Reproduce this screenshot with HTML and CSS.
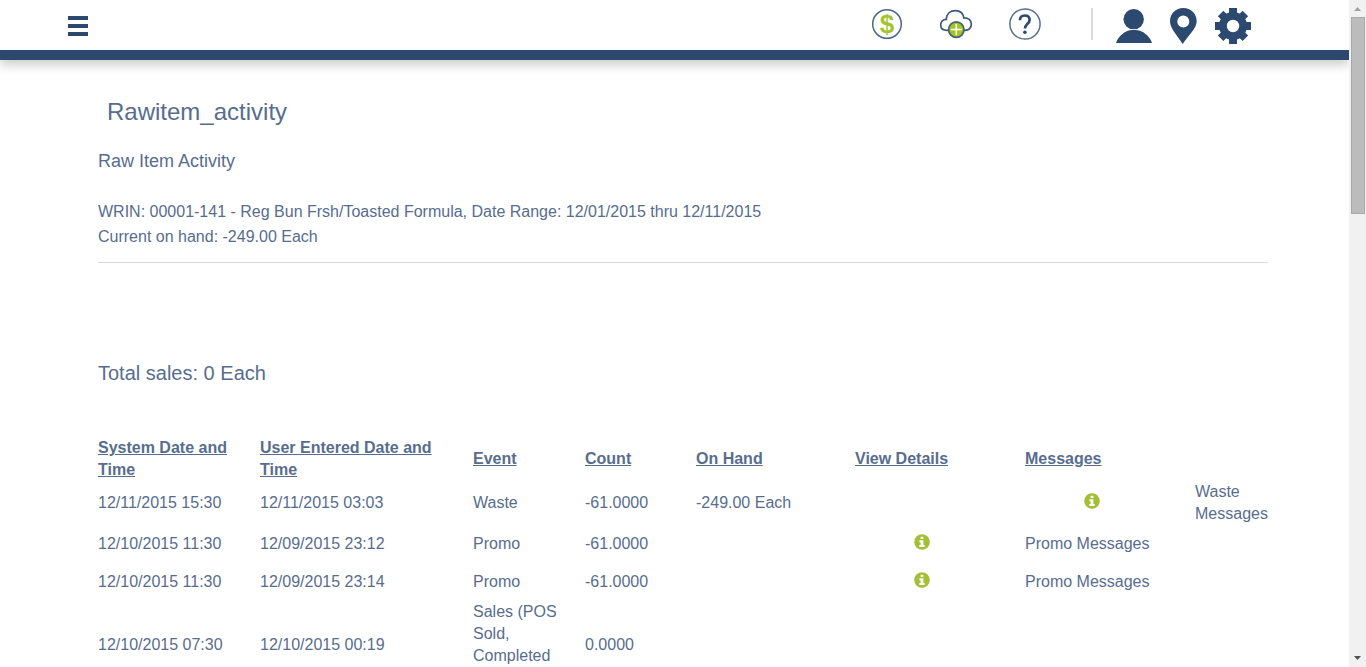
FILE: index.html
```html
<!DOCTYPE html>
<html lang="en">
<head>
<meta charset="utf-8">
<title>Raw Item Activity</title>
<link rel="stylesheet" href="styles.css">
</head>
<body>
<svg class="defs" aria-hidden="true">
  <symbol id="info" viewBox="0 0 16 16">
    <circle cx="8" cy="8" r="7.800" fill="#a2bf35"/>
    <path d="M6.600 2.700h2.800v2.300H6.600zM5.400 6.200h4v4.700h1.300v2H5.300v-2h1.300V8.200H5.400z" fill="#fff"/>
  </symbol>
</svg>
<div class="window">
  <div class="page">
    <header class="topbar">
      <button class="icon-button menu" aria-label="Menu"><span class="bar"></span><span class="bar"></span><span class="bar"></span></button>
      <nav class="tools">
        <button class="icon-button" aria-label="Sales">
          <svg width="32" height="32" viewBox="0 0 32 32"><circle cx="16" cy="16" r="14.300" fill="#fff" stroke="#4d6688" stroke-width="1.500"/><text class="dollar" x="16" y="25" text-anchor="middle">$</text></svg>
        </button>
        <button class="icon-button" aria-label="Add to cloud">
          <svg width="34" height="32" viewBox="0 0 34 32"><path d="M8 22.300C3.500 22.300 1.700 19.500 1.700 16.700c0-3.200 2.400-5.400 5.600-5.300C7.500 5.500 11.500 2.700 16.300 2.700c4.800 0 8 2.900 8.600 7.300 4.200-.3 7.400 2.100 7.400 6 0 3.700-2.300 6.200-6.300 6.300z" fill="#fff" stroke="#3b587f" stroke-width="1.700"/><circle cx="17.300" cy="21.600" r="7.700" fill="#a5c520" stroke="#46617a" stroke-width="1.700"/><path d="M17.300 16v11.200M11.700 21.600h11.200" stroke="#fff" stroke-width="1.500"/></svg>
        </button>
        <button class="icon-button" aria-label="Help">
          <svg width="32" height="32" viewBox="0 0 32 32"><circle cx="16" cy="16" r="15.100" fill="#fff" stroke="#566f91" stroke-width="1.500"/><path d="M10.900 12.200c.1-3 2-4.700 4.800-4.700 3 0 4.900 1.700 4.900 4.400 0 2.200-1.300 3.200-2.700 4.500-1.400 1.200-1.900 2-1.900 4.200" fill="none" stroke="#2c4a70" stroke-width="2.700"/><circle cx="15.900" cy="24.200" r="1.800" fill="#2c4a70"/></svg>
        </button>
      </nav>
      <nav class="account">
        <button class="icon-button" aria-label="User">
          <svg width="36" height="36" viewBox="0 0 36 36"><circle cx="17.700" cy="11.200" r="10.200" fill="#2c4a70"/><path d="M0 35C2 29 7 25 12 22.600Q18 20.300 24 22.600C29 25 34 29 36 35z" fill="#2c4a70"/><path d="M8.500 23.300Q18 19.400 27 23.300" fill="none" stroke="#fff" stroke-width=".8"/></svg>
        </button>
        <button class="icon-button" aria-label="Location">
          <svg width="27" height="36" viewBox="0 0 27 36"><path d="M13.300 0C5.700 0 0 5.800 0 13.200 0 20.500 7.500 27.500 12.700 36 18 27.500 26.700 20.500 26.700 13.200 26.700 5.800 20.900 0 13.300 0zm0 7.600a6 6 0 110 12 6 6 0 010-12z" fill="#2c4a70"/></svg>
        </button>
        <button class="icon-button" aria-label="Settings">
          <svg width="36" height="36" viewBox="0 0 36 36"><g fill="#2c4a70"><path d="M14 0h8v36h-8zM0 14h36v8H0z"/><path d="M14 0h8v36h-8zM0 14h36v8H0z" transform="rotate(45 18 18) translate(.5 .5) scale(.972)"/><circle cx="18" cy="18" r="14"/></g><circle cx="18" cy="18" r="6.200" fill="#fff"/></svg>
        </button>
      </nav>
    </header>
    <main class="content">
      <h1 class="title">Rawitem_activity</h1>
      <h2 class="subtitle">Raw Item Activity</h2>
      <p class="summary">WRIN: 00001-141 - Reg Bun Frsh/Toasted Formula, Date Range: 12/01/2015 thru 12/11/2015<br>Current on hand: -249.00 Each</p>
      <h3 class="total">Total sales: 0 Each</h3>
      <table class="activity">
        <colgroup><col class="c-system"><col class="c-user"><col class="c-event"><col class="c-count"><col class="c-hand"><col class="c-details"><col class="c-messages"><col></colgroup>
        <thead>
          <tr>
            <th><a href="#">System Date and Time</a></th>
            <th><a href="#">User Entered Date and Time</a></th>
            <th><a href="#">Event</a></th>
            <th><a href="#">Count</a></th>
            <th><a href="#">On Hand</a></th>
            <th><a href="#">View Details</a></th>
            <th><a href="#">Messages</a></th>
            <th></th>
          </tr>
        </thead>
        <tbody>
          <tr>
            <td>12/11/2015 15:30</td><td>12/11/2015 03:03</td><td>Waste</td><td>-61.0000</td><td>-249.00 Each</td><td></td>
            <td class="info"><button class="icon-button" aria-label="Details"><svg width="16" height="16"><use href="#info"/></svg></button></td>
            <td class="last">Waste Messages</td>
          </tr>
          <tr>
            <td>12/10/2015 11:30</td><td>12/09/2015 23:12</td><td>Promo</td><td>-61.0000</td><td></td>
            <td class="info"><button class="icon-button" aria-label="Details"><svg width="16" height="16"><use href="#info"/></svg></button></td>
            <td>Promo Messages</td><td></td>
          </tr>
          <tr>
            <td>12/10/2015 11:30</td><td>12/09/2015 23:14</td><td>Promo</td><td>-61.0000</td><td></td>
            <td class="info"><button class="icon-button" aria-label="Details"><svg width="16" height="16"><use href="#info"/></svg></button></td>
            <td>Promo Messages</td><td></td>
          </tr>
          <tr class="tall">
            <td>12/10/2015 07:30</td><td>12/10/2015 00:19</td><td class="event">Sales (POS Sold, Completed</td><td>0.0000</td><td></td><td></td><td></td><td></td>
          </tr>
        </tbody>
      </table>
    </main>
  </div>
  <div class="scrollbar" aria-hidden="true">
    <svg width="17" height="17" viewBox="0 0 17 17"><path d="M5 11h7L8.500 7z" fill="#a0a0a0"/></svg>
    <div class="track"><div class="thumb"></div></div>
    <svg width="17" height="17" viewBox="0 0 17 17"><path d="M5 6h7l-3.500 4z" fill="#505050"/></svg>
  </div>
</div>
</body>
</html>
```
FILE: styles.css
```css
* { box-sizing: border-box; }
body {
  margin: 0;
  background: #fff;
  color: #576d8e;
  font: 16px/22px "Liberation Sans", Arial, sans-serif;
}
.defs { position: absolute; width: 0; height: 0; }
.window { display: flex; height: 100vh; overflow: hidden; }
.page { flex: 1; min-width: 0; overflow: hidden; }

.topbar {
  display: flex;
  align-items: flex-start;
  height: 60px;
  padding: 8px 98px 0 68px;
  border-bottom: 10px solid #2d486e;
  box-shadow: 0 5px 10px rgba(0, 0, 0, 0.2);
}
.icon-button {
  display: block;
  padding: 0;
  border: 0;
  background: none;
  cursor: pointer;
}
.icon-button svg { display: block; }
.menu {
  display: flex;
  flex-direction: column;
  gap: 4px;
  width: 20px;
  margin: 8px auto 0 0;
}
.bar { height: 4px; background: #2d486e; }
.tools { display: flex; gap: 36px; margin-right: 50px; }
.dollar { font: bold 26px "Liberation Sans", Arial, sans-serif; fill: #a5c52f; }
.account {
  display: flex;
  gap: 18px;
  padding-left: 25px;
  background: linear-gradient(#d8d8d8, #d8d8d8) no-repeat 0 0 / 2px 32px;
}

.content { padding: 36px 81px 0 98px; }
.title { margin: 0 0 21px 9px; font-size: 24px; line-height: 32px; font-weight: 400; }
.subtitle { margin: 0 0 25px; font-size: 18px; line-height: 25px; font-weight: 400; }
.summary {
  margin: 0 0 97px;
  padding-bottom: 13px;
  border-bottom: 1px solid #d9d9d9;
  line-height: 25px;
}
.total { margin: 0 0 51px; font-size: 20px; line-height: 26px; font-weight: 400; }

.activity { width: 100%; table-layout: fixed; border-collapse: collapse; }
.activity th, .activity td {
  height: 38px;
  padding: 0 20px 0 0;
  text-align: left;
  vertical-align: middle;
}
.activity a { color: inherit; text-decoration: underline; }
.activity .last { padding-right: 0; }
.activity .info { padding: 0 36px 4px 0; }
.info .icon-button { margin: 0 auto; }
.activity .tall td { height: 88px; }
.activity .event { vertical-align: top; }
.c-system { width: 162px; }
.c-user { width: 213px; }
.c-event { width: 112px; }
.c-count { width: 111px; }
.c-hand { width: 159px; }
.c-details, .c-messages { width: 170px; }

.scrollbar {
  display: flex;
  flex-direction: column;
  width: 17px;
  background: #f1f1f1;
}
.track { flex: 1; padding: 0 1px 0 2px; }
.thumb { height: 197px; border: 1px solid #a8a8a8; background: #bcbcbc; }
```
